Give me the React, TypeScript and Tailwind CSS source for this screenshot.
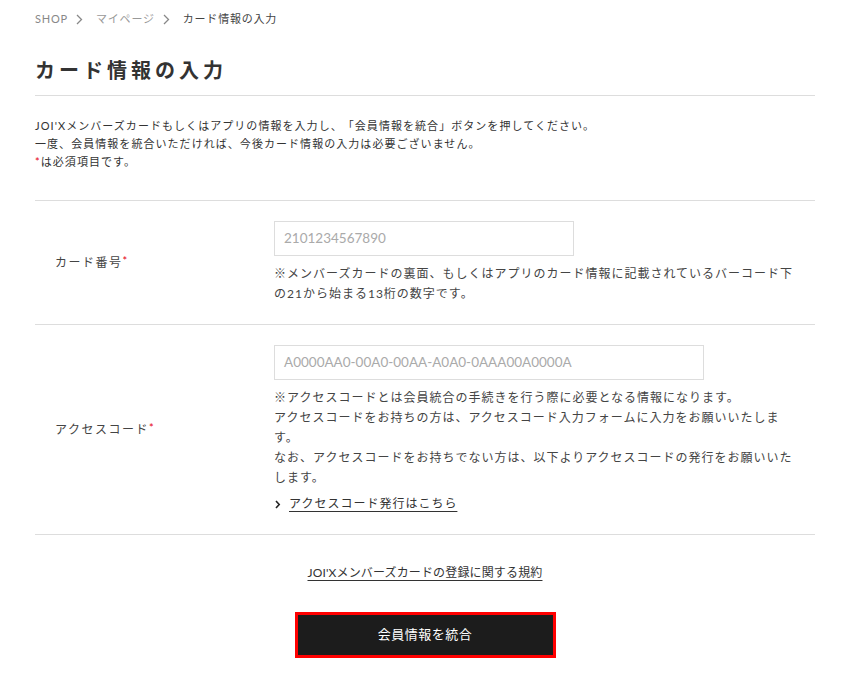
import React from "react";

const font = { fontFamily: 'Lato, "Noto Sans CJK JP", sans-serif' };

function Chevron({ className }: { className?: string }) {
  return (
    <svg className={className} width="7" height="11" viewBox="0 0 7 11" fill="none">
      <path d="M1 1l4.5 4.5L1 10" stroke="currentColor" strokeWidth="1.3" />
    </svg>
  );
}

function Req() {
  return <span className="text-[#e60012] text-[11px] relative -top-[1px]">*</span>;
}

export default function App() {
  return (
    <div className="w-[850px] min-h-[692px] bg-white text-[#333] [text-spacing-trim:space-all]" style={font}>
      <div className="px-[35px]">
        {/* breadcrumb */}
        <div className="pt-[12px] flex items-center h-[26px] text-[11px] leading-[14px] tracking-[0.8px]">
          <span className="text-[#888]">SHOP</span>
          <Chevron className="ml-[8px] mr-[13px] text-[#888]" />
          <span className="text-[#999]">マイページ</span>
          <Chevron className="ml-[8px] mr-[13px] text-[#888]" />
          <span className="text-[#444]">カード情報の入力</span>
        </div>

        {/* title */}
        <h1 className="mt-[30px] text-[20px] leading-[28px] font-bold tracking-[4px] text-[#333] pb-[11px] border-b border-[#ddd]">
          カード情報の入力
        </h1>

        {/* description */}
        <div className="mt-[21px] text-[11px] leading-[18px] tracking-[1.05px] text-[#333]">
          <p>JOI'Xメンバーズカードもしくはアプリの情報を入力し、「会員情報を統合」ボタンを押してください。</p>
          <p>一度、会員情報を統合いただければ、今後カード情報の入力は必要ございません。</p>
          <p>
            <span className="text-[#e60012]">*</span>は必須項目です。
          </p>
        </div>

        {/* form */}
        <div className="mt-[29px] border-t border-[#ddd]">
          {/* row 1 */}
          <div className="grid grid-cols-[239px_1fr] border-b border-[#ddd]">
            <div className="flex items-center pl-[20px] text-[12px] tracking-[1.5px] text-[#444]">
              カード番号<Req />
            </div>
            <div className="pt-[20px] pb-[20px] pr-[20px]">
              <div className="w-[300px] h-[35px] border border-[#ddd] flex items-center px-[9px] text-[13.5px] text-[#aaa]">
                2101234567890
              </div>
              <p className="mt-[8px] text-[12px] leading-[20px] tracking-[1px] text-[#444]">
                ※メンバーズカードの裏面、もしくはアプリのカード情報に記載されているバーコード下の21から始まる13桁の数字です。
              </p>
            </div>
          </div>

          {/* row 2 */}
          <div className="grid grid-cols-[239px_1fr] border-b border-[#ddd]">
            <div className="flex items-center pl-[20px] text-[12px] tracking-[1.5px] text-[#444]">
              アクセスコード<Req />
            </div>
            <div className="pt-[20px] pb-[20px] pr-[20px]">
              <div className="w-[430px] h-[35px] border border-[#ddd] flex items-center px-[9px] text-[13.5px] text-[#aaa]">
                A0000AA0-00A0-00AA-A0A0-0AAA00A0000A
              </div>
              <p className="mt-[8px] text-[12px] leading-[20px] tracking-[1px] text-[#444]">
                ※アクセスコードとは会員統合の手続きを行う際に必要となる情報になります。
                <br />
                アクセスコードをお持ちの方は、アクセスコード入力フォームに入力をお願いいたします。
                <br />
                なお、アクセスコードをお持ちでない方は、以下よりアクセスコードの発行をお願いいたします。
              </p>
              <div className="mt-[6px] flex items-center text-[12px] leading-[20px] tracking-[1px] text-[#333]">
                <svg width="6" height="9" viewBox="0 0 6 9" fill="none" className="ml-[1px] mr-[8px]">
                  <path d="M1 1l3.2 3.5L1 8" stroke="#222" strokeWidth="1.6" />
                </svg>
                <span className="underline underline-offset-[3px]">アクセスコード発行はこちら</span>
              </div>
            </div>
          </div>
        </div>

        {/* terms */}
        <div className="mt-[28px] flex justify-center text-[12px] leading-[20px] tracking-[0.15px] text-[#333]">
          <span className="underline underline-offset-[3px]">JOI'Xメンバーズカードの登録に関する規約</span>
        </div>

        {/* button */}
        <div className="mt-[29px] flex justify-center">
          <button className="w-[261px] h-[46px] bg-[#1c1c1c] border-[3px] border-[#ff0000] text-white text-[13px] tracking-[0.5px]">
            会員情報を統合
          </button>
        </div>
      </div>
    </div>
  );
}
